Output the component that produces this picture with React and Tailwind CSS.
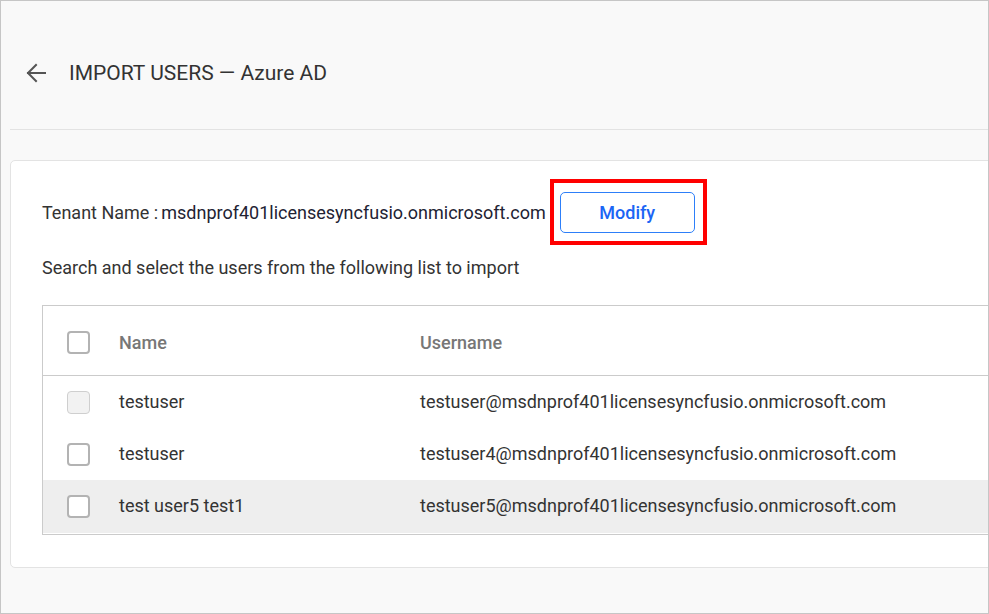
import React from "react";

const rows = [
  { name: "testuser", user: "testuser@msdnprof401licensesyncfusio.onmicrosoft.com", disabled: true },
  { name: "testuser", user: "testuser4@msdnprof401licensesyncfusio.onmicrosoft.com" },
  { name: "test user5 test1", user: "testuser5@msdnprof401licensesyncfusio.onmicrosoft.com", hover: true },
];

function Box({ disabled }) {
  return disabled ? (
    <div className="w-[23px] h-[23px] rounded-[4px] border border-[#cfcfcf] bg-[#f2f2f2]" />
  ) : (
    <div className="w-[23px] h-[23px] rounded-[4px] border-2 border-[#b3b3b3] bg-white" />
  );
}

export default function App() {
  return (
    <div
      className="w-[989px] h-[614px] border border-[#c6c6c6] bg-[#f9f9f9] overflow-hidden text-[#333333]"
      style={{ fontFamily: "Roboto, 'Liberation Sans', sans-serif" }}
    >
      <div className="pl-[9px]">
        <div className="h-[129px] border-b border-[#e3e3e3] -mr-[20px] flex items-center pl-[15px] pt-[16px]">
          <svg width="22" height="22" viewBox="0 0 22 22" fill="none" stroke="#555555" strokeWidth="2" strokeLinecap="square">
            <path d="M20 11H3" />
            <path d="M11 3L3 11L11 19" strokeLinejoin="miter" />
          </svg>
          <h1 className="ml-[22px] text-[21px] leading-[26px] text-[#333333]">IMPORT USERS — Azure AD</h1>
        </div>

        <div className="mt-[30px] -mr-[20px] h-[408px] bg-white border border-[#e3e3e3] rounded-[5px] pl-[31px] pt-[31px]">
          <div className="flex items-center h-[41px]">
            <span className="text-[18px] text-[#333333]">Tenant Name : </span>
            <span className="text-[18px] text-[#222233] ml-[3px]">msdnprof401licensesyncfusio.onmicrosoft.com</span>
            <div className="relative ml-[14px]">
              <button className="w-[135px] h-[41px] rounded-[5px] border border-[#2d7ff9] bg-white text-[18px] font-medium text-[#1b65f5]">
                Modify
              </button>
              <div className="absolute left-[-10px] top-[-13px] w-[157px] h-[66px] border-4 border-[#ff0000] pointer-events-none" />
            </div>
          </div>

          <p className="mt-[22px] text-[18px] leading-[26px] text-[#333333]">
            Search and select the users from the following list to import
          </p>

          <div className="mt-[24px] border border-[#cbcbcb] -mr-[20px]">
            <div className="flex items-center h-[70px] border-b border-[#cbcbcb] pt-[4px]">
              <div className="w-[76px] pl-[24px] flex items-center">
                <Box />
              </div>
              <div className="w-[301px] text-[18px] font-medium text-[#777777]">Name</div>
              <div className="text-[18px] font-medium text-[#777777]">Username</div>
            </div>
            {rows.map((r, i) => (
              <div
                key={i}
                className={`flex items-center ${i === 2 ? "h-[53px] mb-[1px] bg-[#eeeeee]" : "h-[52px] bg-white"}`}
              >
                <div className="w-[76px] pl-[24px] flex items-center">
                  <Box disabled={r.disabled} />
                </div>
                <div className="w-[301px] text-[18px] text-[#333333] pb-[2px]">{r.name}</div>
                <div className="text-[18px] text-[#333333] pb-[2px]">{r.user}</div>
              </div>
            ))}
          </div>
        </div>
      </div>
    </div>
  );
}
